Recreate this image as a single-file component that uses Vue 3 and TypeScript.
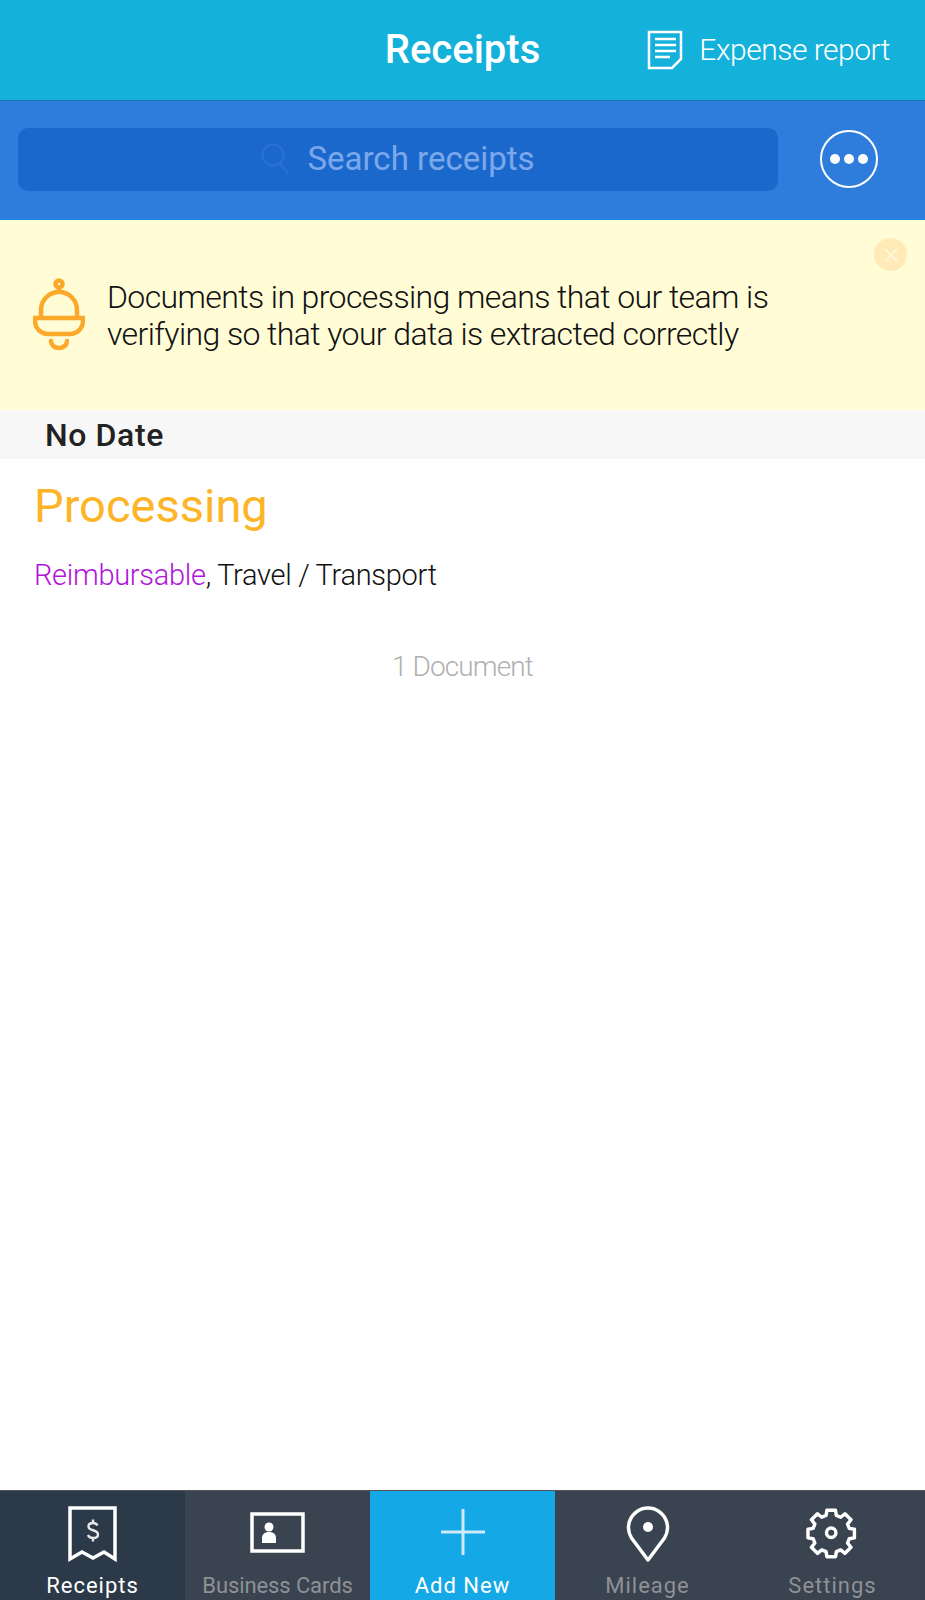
<script setup lang="ts">
type TabId = 'receipts' | 'cards' | 'add' | 'mileage' | 'settings'

const tabs: { id: TabId; label: string }[] = [
  { id: 'receipts', label: 'Receipts' },
  { id: 'cards', label: 'Business Cards' },
  { id: 'add', label: 'Add New' },
  { id: 'mileage', label: 'Mileage' },
  { id: 'settings', label: 'Settings' },
]

const active: TabId = 'receipts'
</script>

<template>
  <div class="screen">
    <header class="top-bar">
      <span />
      <h1 class="top-bar__title">Receipts</h1>
      <div class="top-bar__action">
        <svg width="36" height="40" viewBox="0 0 36 40" fill="none" stroke="#fff" stroke-width="2.500">
          <path d="M2 2h32v27l-9 9H2z" />
          <path d="M8 9h21M8 15h21M8 21h21M8 27h15" />
        </svg>
        <span>Expense report</span>
      </div>
    </header>

    <div class="search-bar">
      <div class="search-bar__input">
        <svg width="30" height="32" viewBox="0 0 30 32" fill="none" stroke="#2b71d4" stroke-width="2">
          <circle cx="12" cy="12" r="10.5" />
          <path d="M19 20l8 11" />
        </svg>
        <span>Search receipts</span>
      </div>
      <button class="search-bar__more">
        <i /><i /><i />
      </button>
    </div>

    <section class="notice">
      <svg width="52" height="74" viewBox="0 0 52 74" fill="none" stroke="#fba82b" stroke-width="4.500">
        <circle cx="26" cy="6" r="3.500" />
        <path d="M26 10v4" />
        <path d="M8 40V32a18 18 0 0 1 36 0v8" />
        <path d="M2 40h48v3a13 13 0 0 1-13 13H15A13 13 0 0 1 2 43z" />
        <path d="M18 63a8 7 0 0 0 16 0" stroke-linecap="round" />
      </svg>
      <p class="notice__text">Documents in processing means that our team is<br />verifying so that your data is extracted correctly</p>
      <span class="notice__close">
        <svg width="14" height="14" viewBox="0 0 14 14" stroke="#fffbe0" stroke-width="1.6">
          <path d="M1 1l12 12M13 1L1 13" />
        </svg>
      </span>
    </section>

    <div class="date-head">No Date</div>

    <article class="doc">
      <div class="doc__status">Processing</div>
      <div class="doc__meta"><span class="doc__flag">Reimbursable</span>, Travel / Transport</div>
    </article>
    <div class="doc-count">1 Document</div>

    <nav class="tab-bar">
      <button
        v-for="tab in tabs"
        :key="tab.id"
        class="tab-bar__btn"
        :class="[`tab-bar__btn--${tab.id}`, { 'tab-bar__btn--active': active === tab.id }]"
      >
        <svg class="tab-bar__icon" width="60" height="60" viewBox="0 0 60 60" fill="none" stroke="#fff" stroke-width="3.500">
          <template v-if="tab.id === 'receipts'">
            <path d="M7 3h45v51l-11-7-11 6-11-6-12 7z" />
            <path d="M34.500 20.500c-.8-1.500-2.500-2.500-4.500-2.500-2.800 0-4.500 1.500-4.500 3.500 0 5 9.500 2.500 9.500 8 0 2.200-2 3.500-5 3.500-2.500 0-4.200-1-5-3M30 14.500v3.500M30 33v3.500" stroke-width="2.400" stroke="#e8e8e8" />
          </template>
          <template v-else-if="tab.id === 'cards'">
            <path d="M4 9h51v37H4z" />
            <circle cx="21" cy="22" r="4.500" fill="#fff" stroke="none" />
            <path d="M14 38v-5c0-4 3-6 7-6s7 2 7 6v5z" fill="#fff" stroke="none" />
          </template>
          <template v-else-if="tab.id === 'add'">
            <path d="M30 4v46M8 27h44" stroke="#cfeaf8" stroke-width="3" />
          </template>
          <template v-else-if="tab.id === 'mileage'">
            <path d="M30 55L13.500 33a19.500 19.500 0 1 1 33 0z" stroke-linejoin="round" />
            <circle cx="30" cy="22" r="5" fill="#fff" stroke="none" />
          </template>
          <template v-else>
            <g transform="translate(2.400 1.900) scale(0.86)">
              <path d="M25 4h10l1 6 5 2 5-4 7 7-4 5 2 5 6 1v10l-6 1-2 5 4 5-7 7-5-4-5 2-1 6H25l-1-6-5-2-5 4-7-7 4-5-2-5-6-1V26l6-1 2-5-4-5 7-7 5 4 5-2z" stroke-linejoin="round" stroke-width="4" />
              <circle cx="30" cy="30" r="5.500" stroke-width="4" />
            </g>
          </template>
        </svg>
        <span class="tab-bar__label">{{ tab.label }}</span>
      </button>
    </nav>
  </div>
</template>

<style scoped>
.screen {
  display: flex;
  flex-direction: column;
  height: 1600px;
  overflow: hidden;
  background: #fff;
  font-family: Roboto, "Liberation Sans", sans-serif;
  font-weight: 300;
  color: #111;
}

.top-bar {
  display: grid;
  grid-template-columns: 1fr auto 1fr;
  align-items: center;
  height: 99px;
  padding-bottom: 1px;
  background: #14b1db;
  color: #fff;
  flex-shrink: 0;
}

.top-bar__title {
  margin: 0;
  font-size: 40px;
  font-weight: 500;
}

.top-bar__action {
  display: flex;
  align-items: center;
  justify-content: flex-end;
  gap: 16px;
  padding-right: 35px;
  font-size: 30px;
  letter-spacing: -0.5px;
}

.search-bar {
  display: flex;
  align-items: center;
  height: 120px;
  padding: 0 47px 2px 18px;
  background: #2e7cdc;
  border-top: 1px solid #1a76b8;
  border-bottom: 1px solid #2585ea;
  box-sizing: border-box;
  flex-shrink: 0;
}

.search-bar__input {
  display: flex;
  align-items: center;
  justify-content: center;
  gap: 16px;
  flex: 1;
  height: 63px;
  background: #1b68cc;
  border-radius: 10px;
  font-size: 33px;
  font-weight: 400;
  line-height: 60px;
  color: #7ba8ea;
}

.search-bar__more {
  display: flex;
  align-items: center;
  justify-content: center;
  gap: 4px;
  width: 58px;
  height: 58px;
  margin-left: 42px;
  padding: 0;
  background: none;
  border: 2px solid #fff;
  border-radius: 50%;
  box-sizing: border-box;
}

.search-bar__more i {
  width: 10px;
  height: 10px;
  background: #fff;
  border-radius: 50%;
}

.notice {
  position: relative;
  display: flex;
  align-items: center;
  gap: 22px;
  height: 190px;
  padding-left: 33px;
  background: #fffcd6;
  flex-shrink: 0;
}

.notice__text {
  margin: 2px 0 0;
  font-size: 32px;
  line-height: 37px;
  letter-spacing: -0.6px;
  color: #111;
}

.notice__close {
  position: absolute;
  top: 18px;
  right: 18px;
  display: flex;
  align-items: center;
  justify-content: center;
  width: 33px;
  height: 33px;
  background: #ffeab8;
  border-radius: 50%;
}

.date-head {
  height: 49px;
  padding-left: 45px;
  background: #f7f7f7;
  font-size: 32px;
  font-weight: 500;
  line-height: 50px;
  letter-spacing: 0.6px;
  color: #222;
  flex-shrink: 0;
}

.doc {
  padding: 20px 34px 0;
}

.doc__status {
  font-size: 47px;
  font-weight: 400;
  line-height: 54px;
  color: #fdb527;
}

.doc__meta {
  margin-top: 25px;
  font-size: 29px;
  line-height: 34px;
  letter-spacing: -0.3px;
}

.doc__flag {
  color: #b014d8;
}

.doc-count {
  margin-top: 58px;
  text-align: center;
  font-size: 28px;
  line-height: 34px;
  letter-spacing: -0.9px;
  color: #b0b0b0;
}

.tab-bar {
  display: grid;
  grid-template-columns: repeat(5, 1fr);
  height: 110px;
  margin-top: auto;
  background: #3a4350;
  border-top: 1px solid #555;
  box-sizing: border-box;
  flex-shrink: 0;
}

.tab-bar__btn {
  display: flex;
  flex-direction: column;
  align-items: center;
  padding: 14px 0 0;
  background: none;
  border: 0;
  font-family: inherit;
  color: #8e9196;
}

.tab-bar__btn--active {
  background: #2c3949;
  color: #fff;
}

.tab-bar__btn--add {
  background: #14a8e6;
  color: #fff;
}

.tab-bar__icon {
  display: block;
  flex-shrink: 0;
}

.tab-bar__label {
  margin-top: 8px;
  font-size: 22px;
  font-weight: 400;
  line-height: 26px;
  letter-spacing: 1px;
}

.tab-bar__btn--cards .tab-bar__label {
  letter-spacing: -0.1px;
}
</style>
